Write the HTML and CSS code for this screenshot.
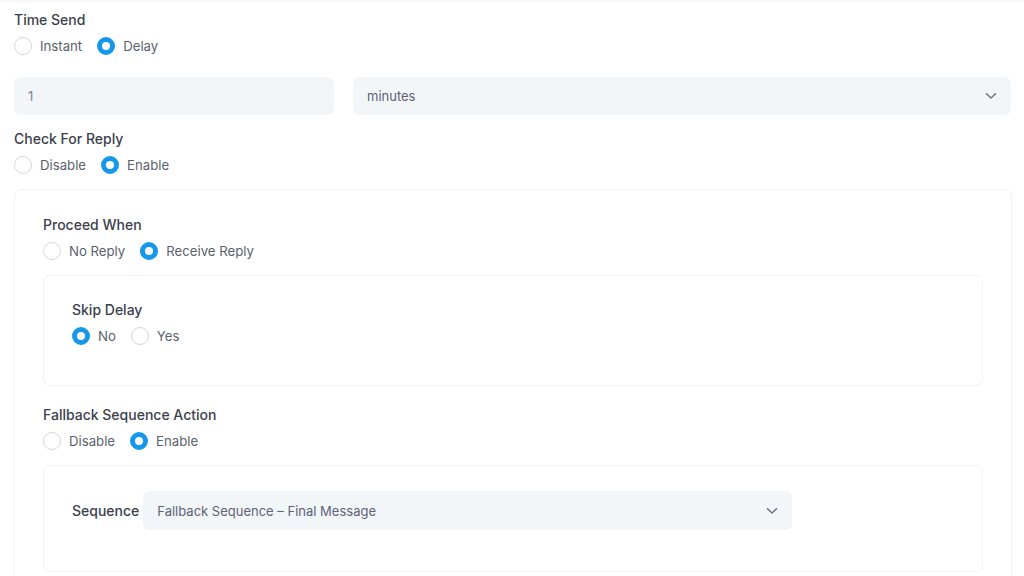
FILE: index.html
```html
<!DOCTYPE html>
<html>
<head>
<meta charset="utf-8">
<link rel="stylesheet" href="styles.css">
</head>
<body>
<div class="page">
  <div class="field-label">Time Send</div>
  <div class="radios">
    <label class="radio"><span class="dot"></span><span>Instant</span></label>
    <label class="radio"><span class="dot on"></span><span>Delay</span></label>
  </div>

  <div class="delay-row">
    <div class="input value">1</div>
    <div class="input select"><span>minutes</span>
      <svg class="chev" width="12" height="8" viewBox="0 0 12 8"><path d="M1.5 1.8 L6 6 L10.5 1.8" fill="none" stroke="#6b7280" stroke-width="1.5" stroke-linecap="round" stroke-linejoin="round"/></svg>
    </div>
  </div>

  <div class="field-label">Check For Reply</div>
  <div class="radios">
    <label class="radio"><span class="dot"></span><span>Disable</span></label>
    <label class="radio"><span class="dot on"></span><span>Enable</span></label>
  </div>

  <div class="card outer">
    <div class="field-label">Proceed When</div>
    <div class="radios">
      <label class="radio"><span class="dot"></span><span>No Reply</span></label>
      <label class="radio"><span class="dot on"></span><span>Receive Reply</span></label>
    </div>

    <div class="card inner skip">
      <div class="field-label">Skip Delay</div>
      <div class="radios">
        <label class="radio"><span class="dot on"></span><span>No</span></label>
        <label class="radio"><span class="dot"></span><span>Yes</span></label>
      </div>
    </div>

    <div class="field-label fallback">Fallback Sequence Action</div>
    <div class="radios">
      <label class="radio"><span class="dot"></span><span>Disable</span></label>
      <label class="radio"><span class="dot on"></span><span>Enable</span></label>
    </div>

    <div class="card inner seq">
      <div class="seq-row">
        <div class="seq-label">Sequence</div>
        <div class="input select seq-select"><span>Fallback Sequence – Final Message</span>
          <svg class="chev" width="12" height="8" viewBox="0 0 12 8"><path d="M1.5 1.8 L6 6 L10.5 1.8" fill="none" stroke="#6b7280" stroke-width="1.5" stroke-linecap="round" stroke-linejoin="round"/></svg>
        </div>
      </div>
    </div>
  </div>
</div>
</body>
</html>
```

FILE: styles.css
```css
* { box-sizing: border-box; }
html, body { margin: 0; padding: 0; background: #ffffff; }
body {
  font-family: "Inter", "Noto Sans", sans-serif;
  color: #3f4254;
  height: 576px;
  overflow: hidden;
  background: linear-gradient(#f6f7f8, #ffffff 4px);
}
.page {
  padding: 10px 12px 0 14px;
}
.field-label {
  font-size: 14px;
  line-height: 20px;
  font-weight: 500;
  color: #3b3f4c;
  margin-bottom: 6px;
}
.radios {
  display: flex;
  gap: 15px;
  height: 20px;
  align-items: center;
}
.radio {
  display: flex;
  align-items: center;
  gap: 8px;
  font-size: 13.2px;
  color: #5a5f6e;
}
.dot {
  width: 18px;
  height: 18px;
  border-radius: 50%;
  border: 1px solid #d5d8dd;
  background: #fff;
  flex: none;
}
.dot.on {
  border: 5px solid #1598ec;
}
.delay-row {
  display: grid;
  grid-template-columns: 320px 658px;
  column-gap: 19px;
  margin-top: 21px;
  margin-bottom: 14px;
}
.input {
  height: 38px;
  background: #f3f6f9;
  border-radius: 6px;
  padding: 0 14px;
  display: flex;
  align-items: center;
  font-size: 13px;
  color: #5e6278;
}
.value { color: #7e8299; }
.select {
  justify-content: space-between;
}
.card {
  border: 1px solid #f0f2f4;
  border-radius: 7px;
  background: #fff;
}
.outer {
  margin-top: 14px;
  width: 998px;
  padding: 25px 28px 0 28px;
  height: 400px;
}
.inner {
  margin-top: 14px;
  padding: 24px 28px 0 28px;
}
.skip { height: 111px; }
.fallback { margin-top: 19px; }
.seq {
  margin-top: 14px;
  height: 107px;
  padding-top: 25px;
}
.seq-row {
  display: flex;
  align-items: center;
  gap: 4px;
}
.seq-label {
  font-size: 14px;
  font-weight: 500;
  color: #3b3f4c;
}
.seq-select {
  width: 649px;
  height: 39px;
}
```
